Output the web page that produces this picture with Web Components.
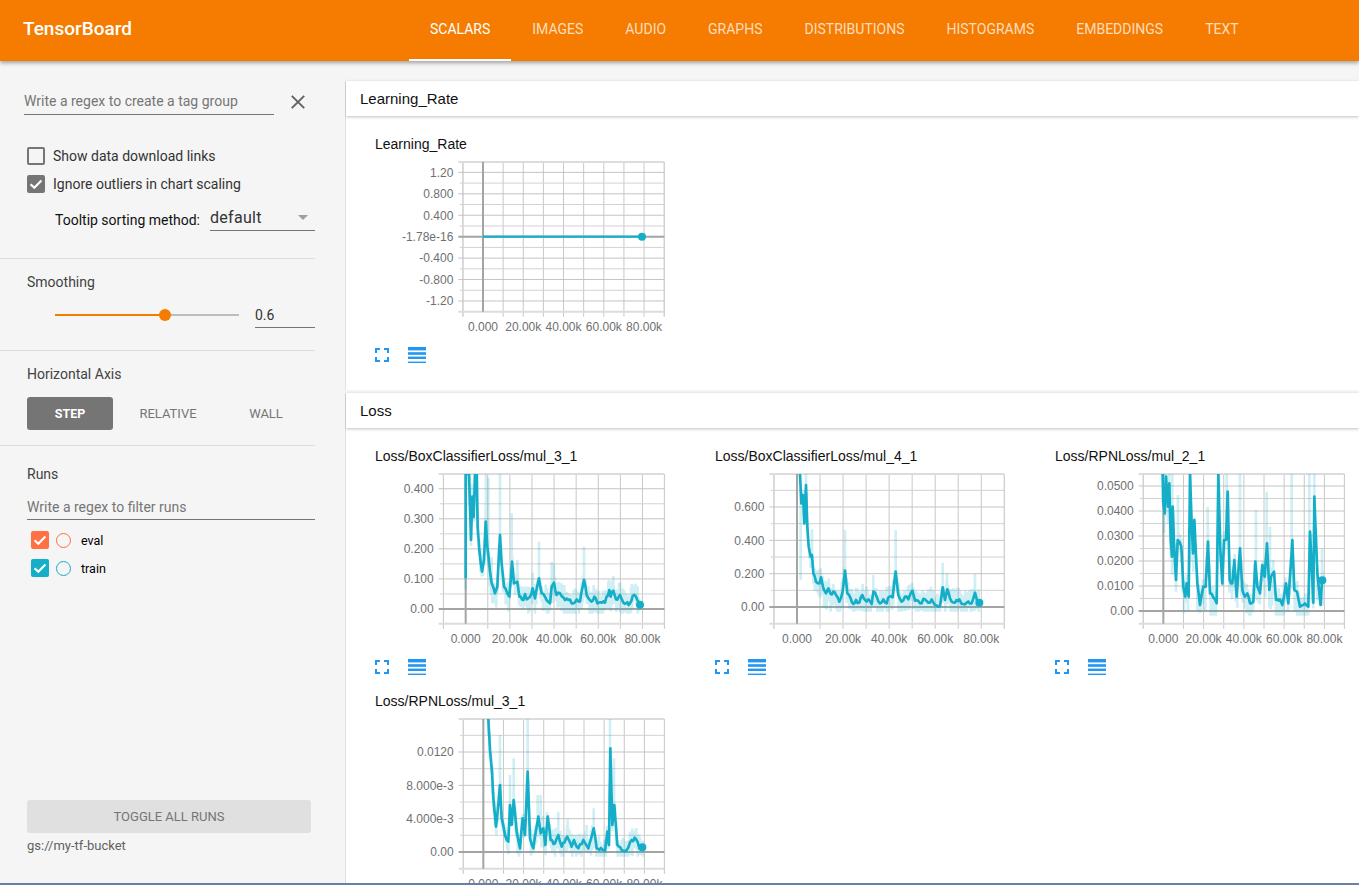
<!DOCTYPE html>
<html>
<head>
<meta charset="utf-8">
<title>TensorBoard</title>
<style>
  html, body { margin: 0; height: 100%; overflow: hidden; background: #f5f5f5; font-family: Roboto, sans-serif; }
  #app { display: grid; grid-template-rows: 61px 1fr 2px; grid-template-columns: 345px 1fr; height: 885px; }
  tb-header { grid-column: 1 / 3; z-index: 2; }
  #edge { grid-column: 1 / 3; background: #6a7fa8; z-index: 3; }
  #main { padding-top: 20px; overflow: hidden; min-height: 0; min-width: 0; }
</style>
</head>
<body>
<div id="app">
  <tb-header title="TensorBoard">
    <tb-tab active>Scalars</tb-tab>
    <tb-tab>Images</tb-tab>
    <tb-tab>Audio</tb-tab>
    <tb-tab>Graphs</tb-tab>
    <tb-tab>Distributions</tb-tab>
    <tb-tab>Histograms</tb-tab>
    <tb-tab>Embeddings</tb-tab>
    <tb-tab>Text</tb-tab>
  </tb-header>
  <tb-sidebar></tb-sidebar>
  <div id="main">
    <tb-category name="Learning_Rate" pad="17">
      <tb-chart name="Learning_Rate"></tb-chart>
    </tb-category>
    <tb-category name="Loss" pad="0">
      <tb-chart name="Loss/BoxClassifierLoss/mul_3_1"></tb-chart>
      <tb-chart name="Loss/BoxClassifierLoss/mul_4_1"></tb-chart>
      <tb-chart name="Loss/RPNLoss/mul_2_1"></tb-chart>
      <tb-chart name="Loss/RPNLoss/mul_3_1"></tb-chart>
    </tb-category>
  </div>
  <div id="edge"></div>
</div>

<script>
const TEAL = '#14aec9';

// all chart numbers are in "zoom units": 3 units = 1px, from the card's top left corner
const CHARTS = {
  'Learning_Rate': {
    left: 309, zero: 369, xStep: 60.4, yZero: 326, yMajor: 64.3,
    labels: [[-3, '-1.20'], [-2, '-0.800'], [-1, '-0.400'], [0, '-1.78e-16'], [1, '0.400'], [2, '0.800'], [3, '1.20']],
    dot: [846, 326],
    line: [[369, 326], [846, 326]], spikes: [], flat: true
  },
  'Loss/BoxClassifierLoss/mul_3_1': {
    left: 250, zero: 317, xStep: 66.3, yZero: 507, yMajor: 90.2,
    labels: [[0, '0.00'], [1, '0.100'], [2, '0.200'], [3, '0.300'], [4, '0.400']],
    dot: [840, 494],
    line: [[317, 415], [317, 102], [327, 102], [333, 300], [337, 170], [341, 230], [345, 102], [350, 102], [353, 260], [358, 330], [366, 395], [372, 360], [377, 245], [382, 320], [390, 395], [395, 430], [405, 460], [412, 440], [420, 285], [425, 370], [432, 440], [442, 460], [448, 470], [456, 365], [462, 430], [472, 425], [478, 470], [490, 480], [495, 462], [500, 478], [510, 470], [518, 445], [525, 475], [537, 415], [545, 460], [555, 470], [570, 490], [575, 440], [582, 428], [590, 465], [600, 460], [610, 472], [625, 480], [640, 490], [650, 478], [660, 485], [672, 420], [680, 465], [695, 485], [703, 470], [712, 490], [735, 488], [748, 450], [752, 470], [760, 452], [768, 478], [780, 465], [790, 488], [810, 490], [818, 468], [828, 470], [840, 494]],
    spikes: [[328, 102], [352, 102], [378, 102], [385, 115], [395, 350], [420, 102], [455, 220], [472, 360], [518, 398], [537, 305], [575, 365], [582, 370], [605, 430], [672, 320], [680, 440], [748, 420], [760, 408], [815, 432], [828, 440]]
  },
  'Loss/BoxClassifierLoss/mul_4_1': {
    left: 222, zero: 291, xStep: 69.1, yZero: 501, yMajor: 100,
    labels: [[0, '0.00'], [1, '0.200'], [2, '0.400'], [3, '0.600']],
    dot: [838, 488],
    line: [[300, 102], [304, 190], [309, 165], [313, 250], [318, 135], [322, 260], [326, 320], [332, 350], [336, 345], [340, 400], [348, 425], [358, 430], [363, 412], [370, 445], [378, 460], [385, 445], [392, 462], [400, 455], [408, 465], [418, 485], [428, 455], [435, 392], [442, 460], [452, 475], [460, 492], [468, 480], [478, 488], [487, 465], [495, 480], [505, 478], [515, 492], [520, 455], [530, 470], [540, 490], [550, 478], [560, 490], [568, 470], [578, 472], [587, 395], [595, 465], [605, 485], [615, 470], [625, 478], [637, 452], [645, 482], [660, 490], [675, 478], [685, 488], [695, 478], [705, 495], [720, 498], [728, 442], [735, 480], [742, 448], [750, 475], [765, 488], [778, 478], [785, 492], [800, 488], [815, 490], [825, 458], [832, 485], [840, 488]],
    spikes: [[302, 420], [318, 102], [336, 268], [362, 385], [386, 415], [425, 425], [435, 270], [487, 440], [500, 440], [520, 405], [560, 440], [587, 270], [637, 430], [675, 460], [693, 440], [728, 368], [741, 400], [780, 460], [825, 402]]
  },
  'Loss/RPNLoss/mul_2_1': {
    left: 310, zero: 370, xStep: 60.4, yZero: 513, yMajor: 75,
    labels: [[0, '0.00'], [1, '0.0100'], [2, '0.0200'], [3, '0.0300'], [4, '0.0400'], [5, '0.0500']],
    dot: [847, 421], wide: true,
    line: [[368, 102], [370, 190], [374, 220], [378, 110], [384, 200], [388, 130], [392, 300], [396, 350], [398, 200], [403, 330], [408, 420], [413, 300], [424, 320], [430, 440], [436, 470], [440, 430], [446, 470], [450, 102], [455, 250], [459, 340], [463, 240], [468, 350], [472, 430], [480, 495], [490, 440], [497, 440], [504, 305], [510, 460], [520, 472], [530, 490], [535, 102], [541, 330], [547, 430], [552, 300], [558, 300], [563, 155], [569, 420], [577, 430], [583, 360], [590, 470], [600, 325], [607, 450], [615, 470], [622, 460], [630, 490], [640, 485], [646, 365], [652, 440], [660, 460], [667, 375], [674, 410], [681, 310], [688, 450], [693, 410], [702, 395], [708, 480], [720, 478], [727, 495], [738, 430], [745, 490], [757, 300], [763, 450], [771, 455], [780, 500], [795, 490], [805, 500], [810, 275], [820, 488], [823, 170], [832, 400], [842, 495], [846, 420], [850, 420]],
    spikes: [[372, 102], [397, 102], [414, 165], [452, 102], [465, 240], [503, 200], [537, 102], [560, 102], [600, 102], [648, 210], [680, 155], [690, 260], [755, 102], [808, 102], [823, 102], [846, 325]]
  },
  'Loss/RPNLoss/mul_3_1': {
    left: 310, zero: 370, xStep: 60.4, yZero: 501, yMajor: 100,
    labels: [[0, '0.00'], [1, '4.000e-3'], [2, '8.000e-3'], [3, '0.0120']],
    dot: [847, 487],
    line: [[385, 102], [390, 195], [396, 260], [400, 340], [408, 425], [414, 370], [420, 300], [425, 400], [435, 450], [445, 470], [450, 360], [455, 420], [461, 345], [470, 440], [480, 490], [488, 400], [495, 450], [503, 260], [510, 460], [520, 490], [535, 395], [542, 445], [550, 430], [556, 480], [563, 395], [572, 465], [585, 475], [595, 450], [605, 485], [622, 455], [635, 485], [642, 465], [655, 490], [670, 465], [685, 490], [701, 430], [710, 490], [735, 498], [742, 440], [747, 480], [751, 190], [757, 420], [763, 360], [772, 480], [790, 497], [800, 495], [815, 465], [828, 462], [838, 490], [850, 487]],
    spikes: [[378, 102], [390, 180], [420, 150], [450, 270], [461, 220], [503, 102], [533, 330], [542, 330], [563, 400], [595, 380], [623, 403], [680, 420], [701, 370], [750, 102], [762, 220], [810, 440], [828, 435]]
  }
};

const CHECK = '<svg viewBox="0 0 18 18" width="18" height="18"><path d="M3.6 9.2l3.7 3.6 7.1-7.4" fill="none" stroke="#fff" stroke-width="2.2"/></svg>';

class TbHeader extends HTMLElement {
  connectedCallback() {
    const shadowRoot = this.attachShadow({ mode: 'open' });
    shadowRoot.innerHTML = `
    <style>
      :host { display: flex; align-items: stretch; height: 61px; background: #f57c00; color: #fff;
              box-shadow: 0 2px 4px rgba(0,0,0,.35); }
      .title { font: 500 19px/58px Roboto, sans-serif; padding-left: 23px; width: 409px; box-sizing: border-box; }
      .tabs { display: flex; }
    </style>
    <div class="title">${this.getAttribute('title')}</div>
    <div class="tabs"><slot></slot></div>`;
  }
}
customElements.define('tb-header', TbHeader);

class TbTab extends HTMLElement {
  connectedCallback() {
    const shadowRoot = this.attachShadow({ mode: 'open' });
    shadowRoot.innerHTML = `
    <style>
      :host { display: block; box-sizing: border-box; height: 61px; padding: 0 21px; text-transform: uppercase;
              font: 400 14px/58px Roboto, sans-serif; color: rgba(255,255,255,.75);
              border-bottom: 2px solid transparent; }
      :host([active]) { color: #fff; border-bottom-color: #fff; }
    </style>
    <slot></slot>`;
  }
}
customElements.define('tb-tab', TbTab);

class TbField extends HTMLElement {
  connectedCallback() {
    const shadowRoot = this.attachShadow({ mode: 'open' });
    shadowRoot.innerHTML = `
    <style>
      :host { display: block; box-sizing: border-box; height: 26px; border-bottom: 1px solid #757575;
              font: 14px/24px Roboto, sans-serif; color: #757575; white-space: nowrap; }
    </style>
    <slot></slot>`;
  }
}
customElements.define('tb-field', TbField);

class TbCheck extends HTMLElement {
  connectedCallback() {
    const shadowRoot = this.attachShadow({ mode: 'open' });
    const on = this.hasAttribute('checked');
    shadowRoot.innerHTML = `
    <style>
      :host { display: flex; align-items: center; height: 28px; gap: 8px; font: 14px Roboto, sans-serif; color: #333; }
      .box { width: 18px; height: 18px; box-sizing: border-box; border: 2px solid #757575; border-radius: 2px; position: relative; }
      .box.on { background: #757575; }
      svg { position: absolute; left: -2px; top: -2px; }
    </style>
    <div class="box ${on ? 'on' : ''}">${on ? CHECK : ''}</div>
    <slot></slot>`;
  }
}
customElements.define('tb-check', TbCheck);

class TbRun extends HTMLElement {
  connectedCallback() {
    const shadowRoot = this.attachShadow({ mode: 'open' });
    const color = this.getAttribute('color');
    shadowRoot.innerHTML = `
    <style>
      :host { display: flex; align-items: center; height: 28px; padding-left: 4px; font: 12.5px Roboto, sans-serif; color: #000; }
      .box { width: 18px; height: 18px; border-radius: 2px; background: ${color}; }
      .dot { width: 15px; height: 15px; box-sizing: border-box; border: 1.7px solid ${color}; border-radius: 50%; margin: 0 10px 0 7px; }
    </style>
    <div class="box">${CHECK}</div><div class="dot"></div><span><slot></slot></span>`;
  }
}
customElements.define('tb-run', TbRun);

class TbSlider extends HTMLElement {
  connectedCallback() {
    const shadowRoot = this.attachShadow({ mode: 'open' });
    shadowRoot.innerHTML = `
    <style>
      :host { display: flex; align-items: center; margin-left: 28px; height: 26px; }
      .track { width: 184px; height: 2px; background: #bdbdbd; position: relative; margin-right: 16px; }
      .fill { width: 110px; height: 2px; background: #f57c00; }
      .knob { position: absolute; left: 104px; top: -5px; width: 12px; height: 12px; border-radius: 50%; background: #f57c00; }
      tb-field { width: 60px; color: #333; padding-top: 1px; }
    </style>
    <div class="track"><div class="fill"></div><div class="knob"></div></div>
    <tb-field><slot></slot></tb-field>`;
  }
}
customElements.define('tb-slider', TbSlider);

class TbSidebar extends HTMLElement {
  connectedCallback() {
    const shadowRoot = this.attachShadow({ mode: 'open' });
    shadowRoot.innerHTML = `
    <style>
      :host { display: flex; flex-direction: column; width: 345px; box-sizing: border-box; background: #f5f5f5;
              font: 14px Roboto, sans-serif; color: #424242; min-height: 0; }
      section { width: 315px; box-sizing: border-box; padding-left: 27px; border-bottom: 1px solid #ddd; }
      .head { height: 20px; line-height: 20px; }
      .tag { display: flex; align-items: center; margin-left: -3px; }
      .tag tb-field { width: 250px; }
      .tag svg { margin: 0 0 0 17px; }
      .sort { display: flex; align-items: center; height: 26px; padding-top: 2px; margin: 7px 0 0 28px; color: #111; }
      .select { display: flex; justify-content: space-between; align-items: center; box-sizing: border-box; width: 105px; height: 26px;
                align-self: flex-start; margin: -2px 0 0 10px; border-bottom: 1px solid #757575; font-size: 16px; letter-spacing: .3px; color: #333; }
      .arrow { width: 0; height: 0; border: 5px solid transparent; border-top-color: #9e9e9e; border-bottom: 0; margin-right: 7px; }
      .axis { display: flex; margin-top: 13px; height: 33px; font: 13px/33px Roboto, sans-serif; color: #757575; text-align: center; }
      .axis div { width: 98px; }
      .axis .step { width: 86px; background: #757575; color: #fff; border-radius: 3px; font-weight: 700; font-size: 12.5px; margin-right: 6px; }
      .axis .relative { width: 98px; }
      .runs { border-bottom: 0; width: 315px; }
      .runs tb-field { padding-top: 1px; }
      .bottom { margin-top: auto; padding: 0 0 27px 27px; }
      .toggle { width: 284px; height: 33px; background: #e0e0e0; border-radius: 3px; font: 13px/33px Roboto, sans-serif;
                color: #757575; text-align: center; }
      .bucket { font-size: 13px; line-height: 20px; margin-top: 3px; color: #616161; }
    </style>
    <section style="padding-top:28px;padding-bottom:25px">
      <div class="tag">
        <tb-field>Write a regex to create a tag group</tb-field>
        <svg width="14" height="14" viewBox="0 0 14 14"><path d="M.8.8l12.4 12.4M13.2.8L.8 13.2" stroke="#616161" stroke-width="1.9" fill="none"/></svg>
      </div>
      <div style="height:27px"></div>
      <tb-check>Show data download links</tb-check>
      <tb-check checked>Ignore outliers in chart scaling</tb-check>
      <div class="sort">Tooltip sorting method:<div class="select">default<span class="arrow"></span></div></div>
    </section>
    <section style="padding-top:13px;padding-bottom:22px">
      <div class="head">Smoothing</div>
      <div style="height:10px"></div>
      <tb-slider>0.6</tb-slider>
    </section>
    <section style="padding-top:13px;padding-bottom:15px">
      <div class="head">Horizontal Axis</div>
      <div class="axis"><div class="step">STEP</div><div class="relative">RELATIVE</div><div>WALL</div></div>
    </section>
    <section class="runs" style="padding-top:18px">
      <div class="head">Runs</div>
      <div style="height:10px"></div>
      <tb-field>Write a regex to filter runs</tb-field>
      <div style="height:6px"></div>
      <tb-run color="#ff7043">eval</tb-run>
      <tb-run color="${TEAL}">train</tb-run>
    </section>
    <div class="bottom">
      <div class="toggle">TOGGLE ALL RUNS</div>
      <div class="bucket">gs://my-tf-bucket</div>
    </div>`;
  }
}
customElements.define('tb-sidebar', TbSidebar);

class TbCategory extends HTMLElement {
  connectedCallback() {
    const shadowRoot = this.attachShadow({ mode: 'open' });
    shadowRoot.innerHTML = `
    <style>
      :host { display: block; margin-bottom: 3px; background: #fff; border-left: 1px solid #e0e0e0; }
      .head { height: 35px; box-sizing: border-box; padding-left: 14px; font: 15px/35px "Liberation Sans", sans-serif; color: #111;
              box-shadow: 0 1px 3px rgba(0,0,0,.25); position: relative; background: #fff; }
      .body { display: grid; grid-template-columns: repeat(3, 340px); padding: 12px 0 ${this.getAttribute('pad')}px 14px; }
    </style>
    <div class="head">${this.getAttribute('name')}</div>
    <div class="body"><slot></slot></div>`;
  }
}
customElements.define('tb-category', TbCategory);

class TbChart extends HTMLElement {
  connectedCallback() {
    const name = this.getAttribute('name');
    const shadowRoot = this.attachShadow({ mode: 'open' });
    shadowRoot.innerHTML = `
    <style>
      :host { display: block; width: 340px; height: 245px; }
      .title { height: 30px; box-sizing: border-box; padding: 6px 0 0 15px; font: 14px/20px "Liberation Sans", sans-serif; color: #111; }
      svg.plot { display: block; width: 340px; height: 190px; }
      text { font: 36px "Liberation Sans", sans-serif; fill: #6f6f6f; }
      .tools { display: flex; align-items: flex-start; gap: 19px; padding-left: 15px; height: 25px; }
      .tools svg { display: block; }
    </style>
    <div class="title">${name}</div>
    <svg class="plot" viewBox="0 90 1020 570">${this._plot(CHARTS[name], name)}</svg>
    <div class="tools">
      <svg width="14" height="14" viewBox="0 0 14 14"><path d="M1 5V1h4M9 1h4v4M13 9v4H9M5 13H1V9" fill="none" stroke="#2196f3" stroke-width="2"/></svg>
      <svg width="18" height="16" viewBox="0 0 18 16" style="margin-top:-1px"><g fill="#2196f3"><rect width="18" height="3.4"/><rect y="5.2" width="18" height="2.6"/><rect y="9.6" width="18" height="2.4"/><rect y="14.6" width="18" height="1.4"/></g></svg>
    </div>`;
  }

  // linear interpolation of the traced line
  _at(line, x) {
    for (let i = 1; i < line.length; i++) {
      if (x <= line[i][0]) {
        const a = line[i - 1], b = line[i];
        const t = b[0] === a[0] ? 0 : (x - a[0]) / (b[0] - a[0]);
        return a[1] + (b[1] - a[1]) * t;
      }
    }
    return line[line.length - 1][1];
  }

  _plot(c, name) {
    const right = 913, top = 102, bottom = 551;
    let seed = name.length * 97 + 13;
    const rnd = () => (seed = (seed * 16807) % 2147483647) / 2147483647;
    let out = `<defs><clipPath id="c"><rect x="${c.left}" y="${top}" width="${right - c.left}" height="${bottom - top}"/></clipPath></defs>`;

    // grid
    const grid = (x1, y1, x2, y2, col, w) => `<line x1="${x1}" y1="${y1}" x2="${x2}" y2="${y2}" stroke="${col}" stroke-width="${w}"/>`;
    for (let n = -1; n < 10; n++) {
      const x = c.zero + n * c.xStep;
      if (x < c.left - 2 || n === 0) continue;
      out += grid(x, top, x, bottom + 15, '#c8c8c8', 3);
    }
    out += grid(c.left, top, c.left, bottom + 15, '#cfcfcf', 3) + grid(right, top, right, bottom + 15, '#cfcfcf', 3);
    for (let n = -8; n < 14; n++) {
      const y = c.yZero - n * c.yMajor / 2;
      if (y < top + 8 || y > bottom - 8 || n === 0) continue;
      const major = n % 2 === 0;
      out += grid(major ? c.left - 14 : c.left - 10, y, right, y, major ? '#c4c4c4' : '#d2d2d2', 3);
    }
    out += grid(c.left - 14, top, right, top, '#dcdcdc', 6) + grid(c.left - 14, bottom, right, bottom, '#dcdcdc', 6);
    out += grid(c.left - 14, c.yZero, right, c.yZero, '#a4a4a4', 6) + grid(c.zero, top, c.zero, bottom, '#a4a4a4', 6);

    // tick labels
    for (const [n, label] of c.labels) {
      out += `<text x="${c.left - 29}" y="${c.yZero - n * c.yMajor + 13}" text-anchor="end">${label}</text>`;
    }
    ['0.000', '20.00k', '40.00k', '60.00k', '80.00k'].forEach((label, i) => {
      out += `<text x="${c.zero + i * 2 * c.xStep}" y="610" text-anchor="middle">${label}</text>`;
    });

    // raw series: a pale band round the line plus the tall spikes
    let pale = '';
    if (!c.flat) {
      const start = c.line[0][0], end = c.line[c.line.length - 1][0];
      for (let x = start; x < end; x += 4) {
        const y = this._at(c.line, x);
        const up = 10 + rnd() * 30, down = 14 + rnd() * (c.wide ? 80 : 40);
        pale += `M${x} ${y - up}V${Math.min(y + down, c.yZero + 14)}`;
      }
      for (const [x, y] of c.spikes) pale += `M${x} ${y}V${this._at(c.line, x)}`;
    }

    // smoothed series, a little roughened between the traced points
    let pts = [];
    c.line.forEach((p, i) => {
      if (i && !c.flat) {
        const a = c.line[i - 1];
        const steps = Math.floor((p[0] - a[0]) / 4);
        for (let s = 1; s < steps; s++) {
          const t = s / steps;
          pts.push([a[0] + (p[0] - a[0]) * t, a[1] + (p[1] - a[1]) * t + (rnd() - .5) * 11]);
        }
      }
      pts.push(p);
    });
    const d = 'M' + pts.map(p => p[0].toFixed(1) + ' ' + p[1].toFixed(1)).join('L');

    out += `<g clip-path="url(#c)">
      <path d="${pale}" fill="none" stroke="${TEAL}" stroke-opacity=".2" stroke-width="8"/>
      <path d="${d}" fill="none" stroke="${TEAL}" stroke-width="${c.flat ? 6.5 : 8}" stroke-linejoin="round"/>
    </g>
    <circle cx="${c.dot[0]}" cy="${c.dot[1]}" r="12" fill="${TEAL}"/>`;
    return out;
  }
}
customElements.define('tb-chart', TbChart);
</script>
</body>
</html>
